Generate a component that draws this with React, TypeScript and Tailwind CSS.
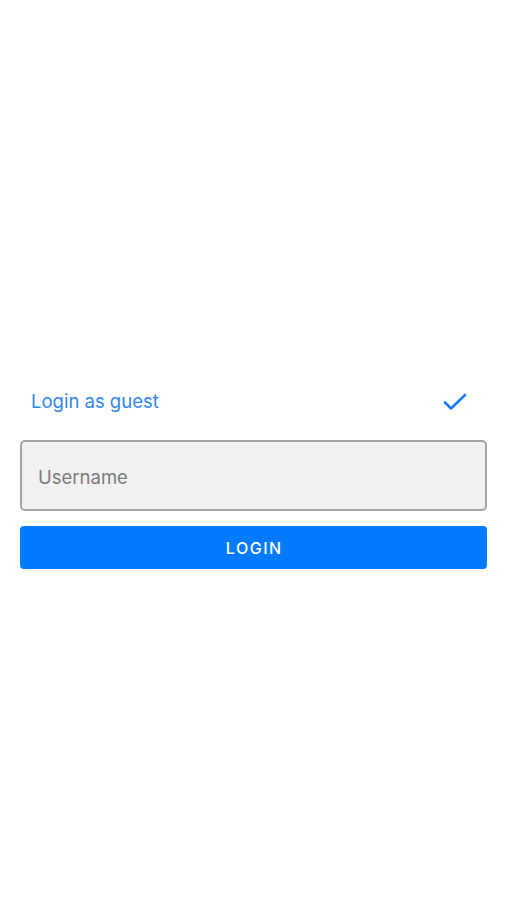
export default function App() {
  return (
    <div
      className="min-h-[900px] w-full bg-white"
      style={{ fontFamily: "Inter, 'Noto Sans', sans-serif" }}
    >
      <div className="flex flex-col px-5 pt-[378px]">
        {/* Guest row */}
        <div className="flex h-[46px] items-center justify-between pl-[11px] pr-[20px] pt-[2px]">
          <span className="text-[18.5px] text-[#2f86f0]">Login as guest</span>
          <svg
            width="24"
            height="18"
            viewBox="0 0 24 18"
            fill="none"
            stroke="#1a7cf2"
            strokeWidth="2.6"
            strokeLinecap="round"
            strokeLinejoin="round"
          >
            <path d="M2 9.5 L8 15.5 L22 2" />
          </svg>
        </div>

        {/* Username field */}
        <div className="mt-[16px] flex h-[71px] items-center rounded-[5px] border-2 border-[#a3a3a3] bg-[#f1f1f1] px-4 pt-[5px]">
          <span className="text-[18.5px] text-[#7b7b7b]">Username</span>
        </div>

        {/* Login button */}
        <button className="mt-[15px] flex h-[43px] items-center justify-center rounded-[4px] bg-[#007aff] pl-[1.5px] text-[16px] font-medium tracking-[1.5px] text-white">
          LOGIN
        </button>
      </div>
    </div>
  );
}
